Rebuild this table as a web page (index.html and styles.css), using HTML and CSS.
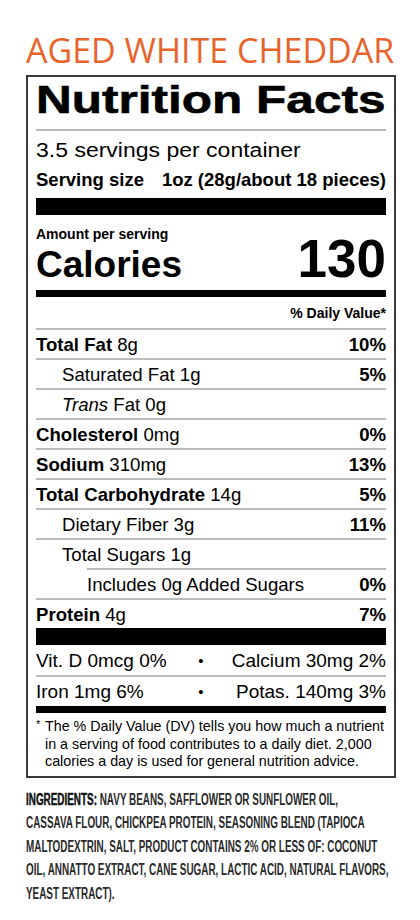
FILE: index.html
```html
<!DOCTYPE html>
<html lang="en">
<head>
    <meta charset="UTF-8">
    <meta name="viewport" content="width=device-width, initial-scale=1.0">
    <title>Aged White Cheddar - Nutrition Facts</title>
    <link rel="stylesheet" href="styles.css">
</head>
<body>
    <div class="page">
        <h1 class="flavor">AGED WHITE CHEDDAR</h1>

        <div class="label">
            <div class="label-title"><span>Nutrition Facts</span></div>
            <div class="thin-rule"></div>
            <div class="servings"><span>3.5 servings per container</span></div>
            <div class="serving-size">
                <span>Serving size</span>
                <span>1oz (28g/about 18 pieces)</span>
            </div>
            <div class="bar-thick"></div>

            <div class="amount">Amount per serving</div>
            <div class="calories">
                <span class="cal-label">Calories</span>
                <span class="cal-value">130</span>
            </div>
            <div class="bar-medium"></div>

            <div class="dv-head">% Daily Value*</div>

            <div class="row"><span><b>Total Fat</b> 8g</span><b>10%</b></div>
            <div class="row sub"><span>Saturated Fat 1g</span><b>5%</b></div>
            <div class="row sub"><span><i>Trans</i> Fat 0g</span></div>
            <div class="row"><span><b>Cholesterol</b> 0mg</span><b>0%</b></div>
            <div class="row"><span><b>Sodium</b> 310mg</span><b>13%</b></div>
            <div class="row"><span><b>Total Carbohydrate</b> 14g</span><b>5%</b></div>
            <div class="row sub"><span>Dietary Fiber 3g</span><b>11%</b></div>
            <div class="row sub"><span>Total Sugars 1g</span></div>
            <div class="row added"><span>Includes 0g Added Sugars</span><b>0%</b></div>
            <div class="row"><span><b>Protein</b> 4g</span><b>7%</b></div>
            <div class="bar-thick"></div>

            <div class="mineral">
                <span>Vit. D 0mcg 0%</span>
                <span class="dot">•</span>
                <span class="right">Calcium 30mg 2%</span>
            </div>
            <div class="mineral lined">
                <span>Iron 1mg 6%</span>
                <span class="dot">•</span>
                <span class="right">Potas. 140mg 3%</span>
            </div>
            <div class="bar-medium"></div>

            <div class="footnote">
                <span class="star">*</span>
                <p>The % Daily Value (DV) tells you how much a nutrient<br>
                in a serving of food contributes to a daily diet. 2,000<br>
                calories a day is used for general nutrition advice.</p>
            </div>
        </div>

        <div class="ingredients">
            <p><b>INGREDIENTS:</b> NAVY BEANS, SAFFLOWER OR SUNFLOWER OIL,<br>
            CASSAVA FLOUR, CHICKPEA PROTEIN, SEASONING BLEND (TAPIOCA<br>
            MALTODEXTRIN, SALT, PRODUCT CONTAINS 2% OR LESS OF: COCONUT<br>
            OIL, ANNATTO EXTRACT, CANE SUGAR, LACTIC ACID, NATURAL FLAVORS,<br>
            YEAST EXTRACT).</p>
        </div>
    </div>
</body>
</html>
```

FILE: styles.css
```css
body {
    margin: 0;
    font-family: "Liberation Sans", Arial, sans-serif;
    color: #000;
    background: #fff;
}
.page {
    padding: 33px 24px 0 26px;
}
.flavor {
    margin: 0;
    font-family: "Open Sans", sans-serif;
    font-weight: 400;
    font-size: 34px;
    line-height: 34px;
    color: #e8642c;
    white-space: nowrap;
}
.label {
    width: 370px;
    box-sizing: border-box;
    margin-top: 8px;
    border: 2px solid #3a3a3a;
    padding: 0 8px 5px;
}
.label-title {
    margin-top: 3px;
    font-size: 39px;
    line-height: 39px;
    font-weight: bold;
    white-space: nowrap;
}
.label-title span {
    display: inline-block;
    transform: scaleX(1.27);
    transform-origin: left center;
    -webkit-text-stroke: 0.6px #000;
}
.thin-rule {
    margin-top: 10px;
    height: 2px;
    background: #bbb;
}
.servings {
    margin-top: 8px;
    font-size: 19.5px;
    line-height: 22px;
    white-space: nowrap;
}
.servings span {
    display: inline-block;
    transform: scaleX(1.18);
    transform-origin: left center;
}
.serving-size {
    margin-top: 8px;
    display: flex;
    justify-content: space-between;
    font-size: 18.5px;
    line-height: 21px;
    font-weight: bold;
}
.bar-thick {
    margin-top: 8px;
    height: 17px;
    background: #000;
}
.bar-medium {
    margin-top: 6px;
    height: 7px;
    background: #000;
}
.amount {
    margin-top: 13px;
    font-size: 14px;
    line-height: 12px;
    font-weight: bold;
}
.calories {
    display: flex;
    justify-content: space-between;
    align-items: baseline;
    font-weight: bold;
}
.cal-label {
    font-size: 37px;
    line-height: 38px;
}
.cal-value {
    font-size: 53px;
    line-height: 38px;
}
.dv-head {
    margin-top: 8px;
    margin-bottom: 7px;
    text-align: right;
    font-size: 14px;
    line-height: 16px;
    font-weight: bold;
}
.row {
    display: flex;
    justify-content: space-between;
    border-top: 2px solid #bbb;
    padding-top: 1px;
    font-size: 18.6px;
    line-height: 27px;
    white-space: nowrap;
}
.row.sub span {
    padding-left: 26px;
}
.row.added {
    margin-left: 51px;
}
.row + .bar-thick {
    margin-top: 0;
}
.mineral {
    display: grid;
    grid-template-columns: 160px 10px 1fr;
    padding-top: 2px;
    font-size: 19px;
    line-height: 28px;
    white-space: nowrap;
}
.mineral.lined {
    border-top: 2px solid #bbb;
    padding-top: 1px;
}
.mineral .dot {
    font-size: 15px;
    text-align: center;
}
.mineral .right {
    text-align: right;
}
.mineral + .bar-medium {
    margin-top: 0;
}
.footnote {
    display: flex;
    padding-top: 5px;
    font-size: 14.3px;
    line-height: 17.5px;
    white-space: nowrap;
}
.footnote .star {
    width: 9px;
    flex: none;
    font-size: 11px;
    line-height: 13px;
}
.footnote p {
    margin: 0;
}
.ingredients {
    width: 370px;
    margin-top: 10px;
    overflow: hidden;
}
.ingredients p {
    margin: 0;
    width: 620px;
    font-size: 16.8px;
    line-height: 23.5px;
    font-weight: bold;
    color: #2a2a2a;
    white-space: nowrap;
    transform: scaleX(0.59);
    transform-origin: left top;
}
.ingredients b {
    color: #111;
    -webkit-text-stroke: 0.5px #111;
}
```
